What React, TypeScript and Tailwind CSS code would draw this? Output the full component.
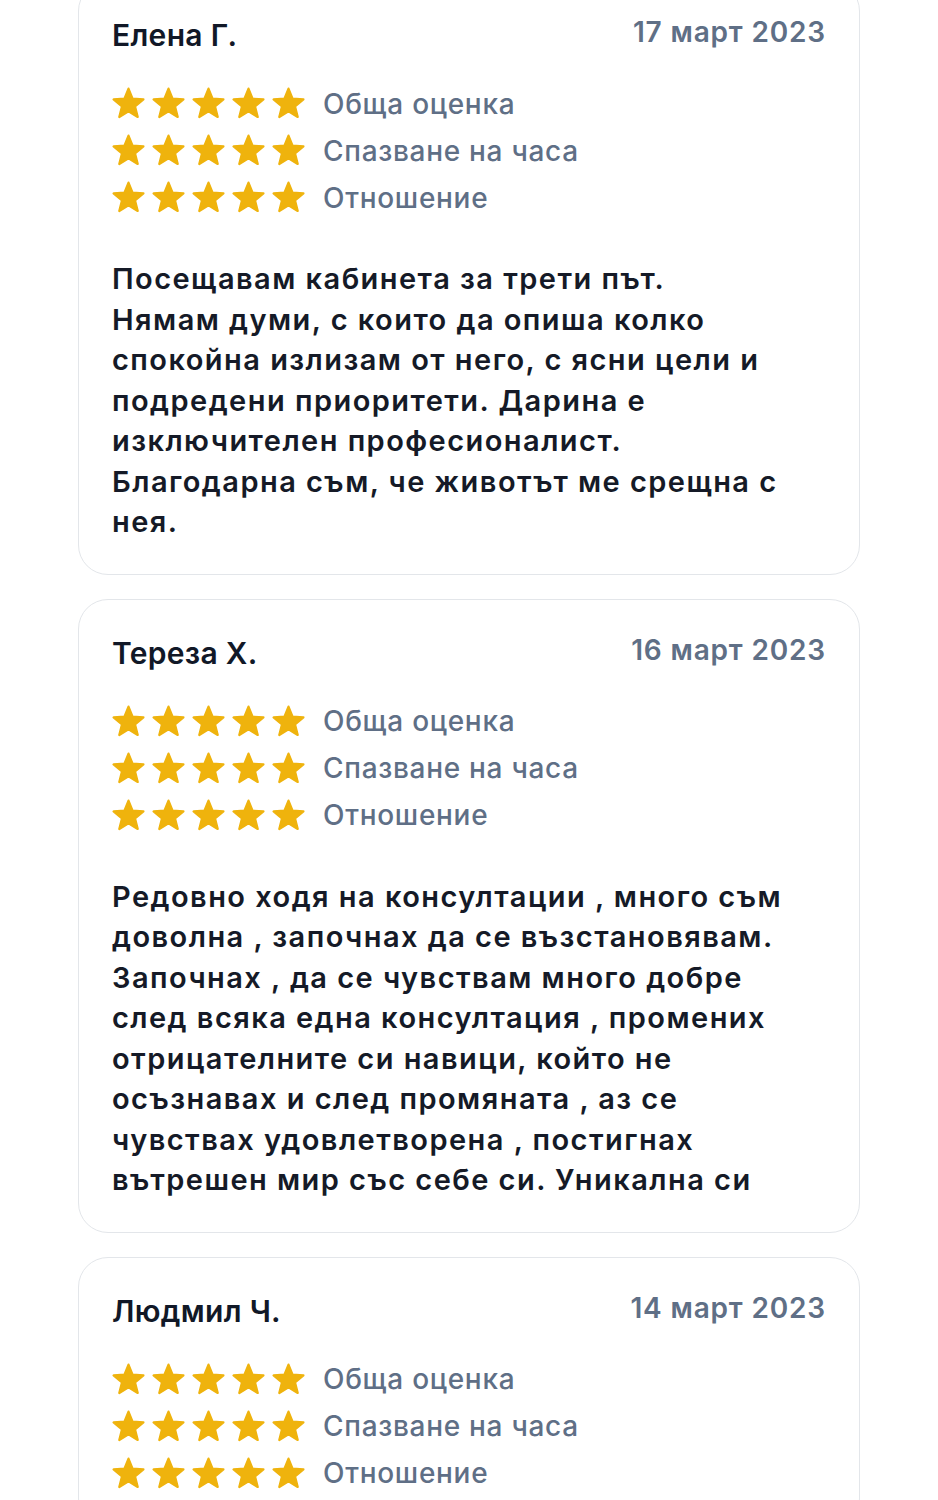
import React from 'react'

type Review = {
  name: string
  date: string
  lines: string[]
}

const reviews: Review[] = [
  {
    name: 'Елена Г.',
    date: '17 март 2023',
    lines: [
      'Посещавам кабинета за трети път.',
      'Нямам думи, с които да опиша колко',
      'спокойна излизам от него, с ясни цели и',
      'подредени приоритети. Дарина е',
      'изключителен професионалист.',
      'Благодарна съм, че животът ме срещна с',
      'нея.',
    ],
  },
  {
    name: 'Тереза Х.',
    date: '16 март 2023',
    lines: [
      'Редовно ходя на консултации , много съм',
      'доволна , започнах да се възстановявам.',
      'Започнах , да се чувствам много добре',
      'след всяка една консултация , промених',
      'отрицателните си навици, който не',
      'осъзнавах и след промяната , аз се',
      'чувствах удовлетворена , постигнах',
      'вътрешен мир със себе си. Уникална си',
    ],
  },
  {
    name: 'Людмил Ч.',
    date: '14 март 2023',
    lines: [],
  },
]

const labels = ['Обща оценка', 'Спазване на часа', 'Отношение']

function Star() {
  return (
    <svg viewBox="1.5 1.5 21 21" className="w-[33px] h-[33px] shrink-0">
      <polygon
        points="12,2.5 14.59,8.94 21.51,9.41 16.18,13.86 17.88,20.59 12,16.9 6.12,20.59 7.82,13.86 2.49,9.41 9.41,8.94"
        fill="#efb30d"
        stroke="#efb30d"
        strokeWidth="1.4"
        strokeLinejoin="round"
      />
    </svg>
  )
}

function Card({ review }: { review: Review }) {
  return (
    <div className="bg-white border border-[#e3e6ea] rounded-[30px] px-[33px] pt-[35px] pb-[31px]">
      <div className="flex justify-between items-start">
        <h2 className="text-[30px] leading-[36px] font-semibold tracking-[0.01em] text-[#111827]">{review.name}</h2>
        <span className="text-[28px] leading-[30px] font-semibold tracking-[0.03em] text-[#5f6f86]">{review.date}</span>
      </div>

      <div className="mt-[27px] flex flex-col">
        {labels.map((label) => (
          <div key={label} className="h-[47px] flex items-center">
            <div className="flex gap-[7px]">
              <Star />
              <Star />
              <Star />
              <Star />
              <Star />
            </div>
            <span className="ml-[18px] text-[28px] font-medium tracking-[0.025em] text-[#5f6f86]">{label}</span>
          </div>
        ))}
      </div>

      {review.lines.length > 0 && (
        <p className="mt-[38px] text-[29px] leading-[40.5px] font-semibold tracking-[0.05em] text-[#151a27]">
          {review.lines.map((line, i) => (
            <span key={i} className="block whitespace-nowrap">
              {line}
            </span>
          ))}
        </p>
      )}
    </div>
  )
}

export default function App() {
  return (
    <div lang="bg" className="bg-white min-h-screen overflow-hidden font-['Inter','Noto_Sans',sans-serif]">
      <div className="px-[78px] -mt-[19px] flex flex-col gap-6">
        {reviews.map((r) => (
          <Card key={r.name} review={r} />
        ))}
      </div>
    </div>
  )
}
